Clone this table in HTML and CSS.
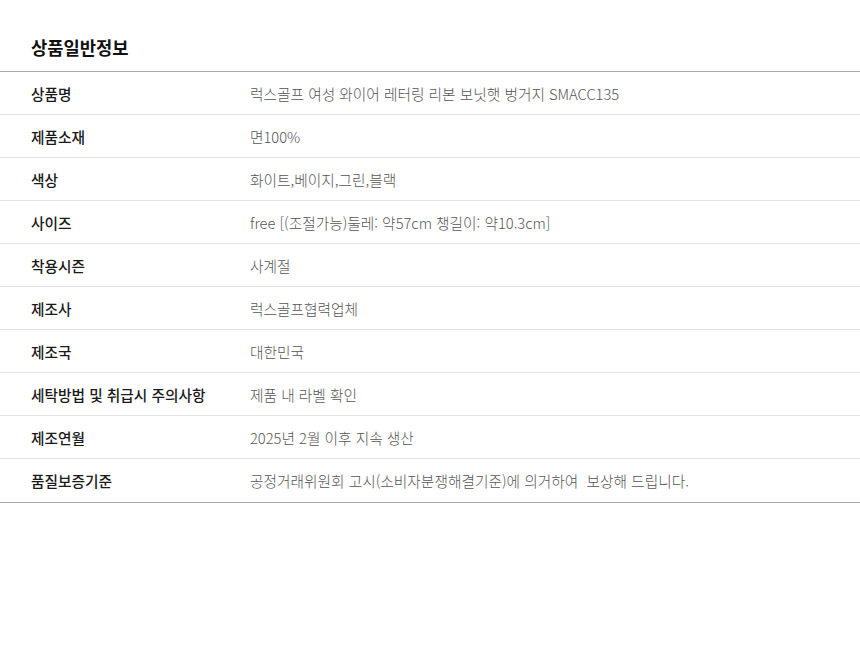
FILE: index.html
```html
<!DOCTYPE html>
<html lang="ko">
<head>
<meta charset="utf-8">
<link rel="stylesheet" href="styles.css">
</head>
<body>
<section class="info">
  <h2 class="info-title">상품일반정보</h2>
  <div class="info-table">
    <div class="row"><div class="label">상품명</div><div class="value">럭스골프 여성 와이어 레터링 리본 보닛햇 벙거지 SMACC135</div></div>
    <div class="row"><div class="label">제품소재</div><div class="value">면100%</div></div>
    <div class="row"><div class="label">색상</div><div class="value">화이트,베이지,그린,블랙</div></div>
    <div class="row"><div class="label">사이즈</div><div class="value">free [(조절가능)둘레: 약57cm 챙길이: 약10.3cm]</div></div>
    <div class="row"><div class="label">착용시즌</div><div class="value">사계절</div></div>
    <div class="row"><div class="label">제조사</div><div class="value">럭스골프협력업체</div></div>
    <div class="row"><div class="label">제조국</div><div class="value">대한민국</div></div>
    <div class="row"><div class="label">세탁방법 및 취급시 주의사항</div><div class="value">제품 내 라벨 확인</div></div>
    <div class="row"><div class="label">제조연월</div><div class="value">2025년 2월 이후 지속 생산</div></div>
    <div class="row"><div class="label">품질보증기준</div><div class="value">공정거래위원회 고시(소비자분쟁해결기준)에 의거하여&nbsp; 보상해 드립니다.</div></div>
  </div>
</section>
</body>
</html>
```
FILE: styles.css
```css
html, body {
  margin: 0;
  padding: 0;
  background: #fff;
}
body {
  font-family: "Noto Sans CJK KR", "Noto Sans", sans-serif;
  color: #222;
}
.info {
  width: 860px;
}
.info-title {
  margin: 0;
  padding: 35px 31px 12px;
  font-size: 17.7px;
  line-height: 24px;
  font-weight: 700;
  color: #111;
}
.info-table {
  border-top: 1px solid #a9a9a9;
}
.row {
  display: grid;
  grid-template-columns: 219px 1fr;
  height: 42px;
  align-items: center;
  padding-left: 31px;
  border-bottom: 1px solid #e2e2e2;
  font-size: 14.7px;
}
.row:last-child {
  height: 43px;
  border-bottom-color: #a9a9a9;
}
.label {
  font-weight: 500;
  color: #1a1a1a;
}
.value {
  color: #555;
  font-weight: 300;
}
```
